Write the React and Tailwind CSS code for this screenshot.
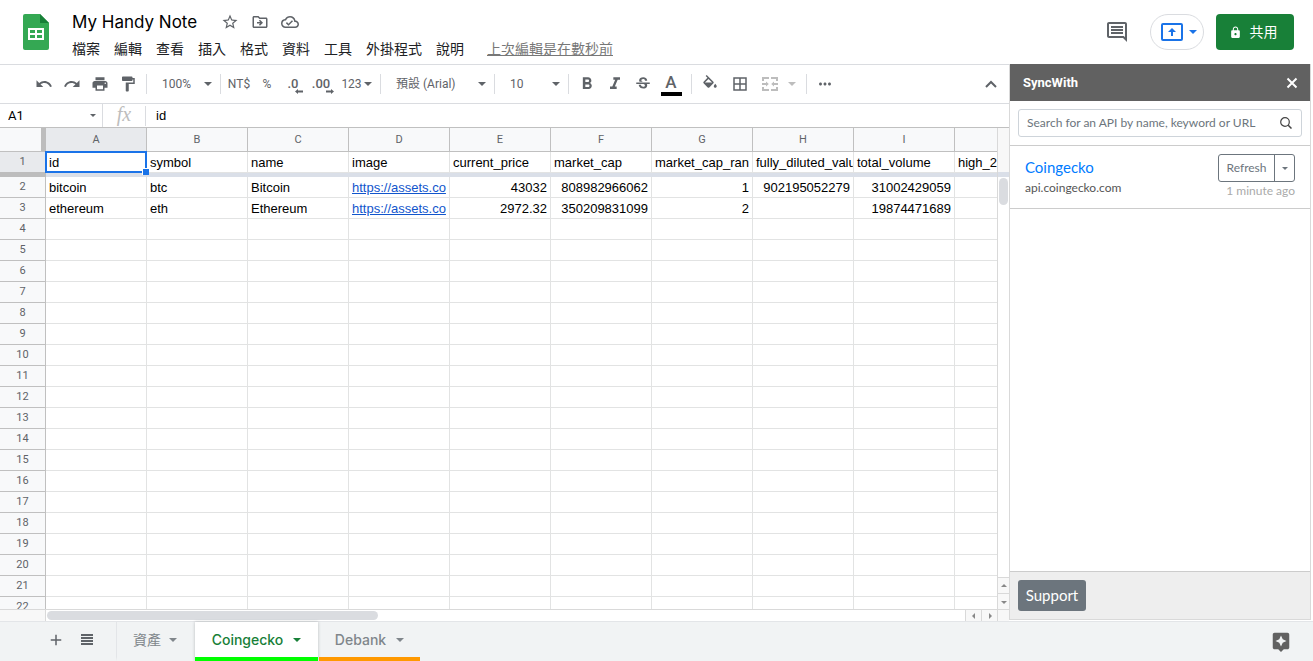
import React, { useState } from "react";
import {
  MdUndo,
  MdRedo,
  MdPrint,
  MdFormatPaint,
  MdFormatBold,
  MdFormatItalic,
  MdStrikethroughS,
  MdBorderAll,
  MdMoreHoriz,
  MdStarBorder,
  MdOutlineDriveFileMove,
  MdOutlineCloudDone,
  MdOutlineComment,
  MdLock,
  MdAdd,
  MdAssistant,
} from "react-icons/md";

const MENUS = ["檔案", "編輯", "查看", "插入", "格式", "資料", "工具", "外掛程式", "說明"];

const COLUMNS = "ABCDEFGHIJKL".split("");

const HEADINGS = [
  "id",
  "symbol",
  "name",
  "image",
  "current_price",
  "market_cap",
  "market_cap_ran",
  "fully_diluted_valu",
  "total_volume",
  "high_2",
];

const COINS = [
  ["bitcoin", "btc", "Bitcoin", "https://assets.co", 43032, 808982966062, 1, 902195052279, 31002429059],
  ["ethereum", "eth", "Ethereum", "https://assets.co", 2972.32, 350209831099, 2, "", 19874471689],
];

const ROW_COUNT = 28;

function Caret({ className = "" }) {
  return (
    <svg viewBox="0 0 8 4" className={`h-1 w-2 shrink-0 fill-current ${className}`} aria-hidden="true">
      <path d="M0 0h8L4 4z" />
    </svg>
  );
}

function Divider({ className = "" }) {
  return <span className={`h-5 w-px shrink-0 bg-[#dadce0] ${className}`} />;
}

function ToolButton({ label, className = "w-7", children }) {
  return (
    <button
      type="button"
      aria-label={label}
      className={`flex h-7 shrink-0 items-center justify-center rounded-sm hover:bg-gray-100 ${className}`}
    >
      {children}
    </button>
  );
}

function ToolSelect({ label, options, className }) {
  return (
    <div className={`relative flex h-7 shrink-0 items-center ${className}`}>
      <select aria-label={label} className="h-full w-full appearance-none bg-transparent pl-[15px] outline-none">
        {options.map((option) => (
          <option key={option}>{option}</option>
        ))}
      </select>
      <Caret className="pointer-events-none absolute right-2" />
    </div>
  );
}

function SheetsLogo() {
  return (
    <svg viewBox="0 0 26 36" className="h-9 w-[26px] shrink-0" aria-label="Sheets">
      <path d="M2 0H17l9 9v25a2 2 0 0 1-2 2H2a2 2 0 0 1-2-2V2a2 2 0 0 1 2-2z" fill="#34a853" />
      <path d="M17 0l9 9h-9z" fill="#188038" />
      <path d="M5 14h16v12H5zM7 16v3h5v-3zM14 16v3h5v-3zM7 21v3h5v-3zM14 21v3h5v-3z" fill="#fff" fillRule="evenodd" />
    </svg>
  );
}

function FillIcon() {
  return (
    <svg viewBox="0 0 24 24" className="size-[18px] fill-current" aria-hidden="true">
      <path d="M16.560 8.940L7.620 0 6.210 1.410l2.380 2.380-5.150 5.150c-.59.59-.59 1.540 0 2.120l5.500 5.500c.29.29.68.44 1.060.44s.77-.15 1.060-.44l5.500-5.500c.59-.58.59-1.530 0-2.120zM5.210 10L10 5.210 14.790 10H5.210zM19 11.500s-2 2.170-2 3.500c0 1.100.9 2 2 2s2-.9 2-2c0-1.330-2-3.500-2-3.500z" />
    </svg>
  );
}

function MergeIcon() {
  return (
    <svg viewBox="0 0 16 14" className="h-[14px] w-4" fill="none" stroke="currentColor" strokeWidth="2" aria-hidden="true">
      <path d="M7 1H1v3M9 1h6v3M7 13H1v-3M9 13h6v-3" />
      <path d="M0 7h5M16 7h-5" />
      <path d="M4 4.500L6.800 7 4 9.500zM12 4.500L9.200 7 12 9.500z" fill="currentColor" stroke="none" />
    </svg>
  );
}

function DecimalIcon({ text, more }) {
  return (
    <span className="flex flex-col items-end pt-[5px] text-[13px] font-medium leading-[10px]">
      {text}
      <svg viewBox="0 0 8 5" className="-mr-1 h-[5px] w-2" fill="currentColor" aria-hidden="true">
        {more ? <path d="M0 1.500h5V0l3 2.500L5 5V3.500H0z" /> : <path d="M8 1.500H3V0L0 2.500 3 5V3.500h5z" />}
      </svg>
    </span>
  );
}

function Header() {
  return (
    <header className="flex h-16 shrink-0 items-start bg-white pl-[23px] pr-[19px] pt-[14px]">
      <SheetsLogo />

      <div className="-mt-1 ml-4 flex-1">
        <div className="flex h-6 items-center text-[#5f6368]">
          <h1 className="pl-[7px] pr-6 font-[Inter,sans-serif] text-[17px] leading-6 text-black">My Handy Note</h1>
          <div className="flex gap-3">
            <button type="button" aria-label="Star"><MdStarBorder size={18} /></button>
            <button type="button" aria-label="Move"><MdOutlineDriveFileMove size={18} /></button>
            <button type="button" aria-label="Saved"><MdOutlineCloudDone size={18} /></button>
          </div>
        </div>

        <nav className="mt-[5px] flex items-center text-[14px] leading-5 text-[#202124]">
          {MENUS.map((menu) => (
            <button key={menu} type="button" className="rounded-sm px-[7px] hover:bg-gray-100">
              {menu}
            </button>
          ))}
          <a href="#history" className="ml-4 text-[#777] underline">上次編輯是在數秒前</a>
        </nav>
      </div>

      <div className="flex items-center">
        <button type="button" aria-label="Comments" className="mr-[21px] text-[#5f6368]">
          <MdOutlineComment size={24} />
        </button>
        <button
          type="button"
          aria-label="Present"
          className="mr-3 flex h-9 w-[54px] items-center justify-center gap-[6px] rounded-full border border-[#dadce0] pl-1 text-[#1a73e8]"
        >
          <svg viewBox="0 0 22 18" className="h-[18px] w-[22px]" aria-hidden="true">
            <rect x="1" y="1" width="20" height="16" rx="1" fill="none" stroke="currentColor" strokeWidth="2" />
            <path d="M11 5l4 4h-3v4h-2V9H7z" fill="currentColor" />
          </svg>
          <Caret />
        </button>
        <button
          type="button"
          className="flex h-9 w-[78px] items-center justify-center gap-2 rounded bg-[#188038] pr-1 text-[14px] text-white"
        >
          <MdLock size={13} />
          共用
        </button>
      </div>
    </header>
  );
}

function Toolbar() {
  return (
    <div className="flex h-10 shrink-0 items-center border-y border-[#dadce0] pl-[30px] pr-1 font-[Roboto,'Noto_Sans_CJK_TC',sans-serif] text-[12px] text-[#5f6368]">
      <ToolButton label="Undo"><MdUndo size={18} /></ToolButton>
      <ToolButton label="Redo"><MdRedo size={18} /></ToolButton>
      <ToolButton label="Print"><MdPrint size={18} /></ToolButton>
      <ToolButton label="Paint format"><MdFormatPaint size={18} /></ToolButton>
      <Divider className="ml-1" />
      <ToolSelect label="Zoom" options={["100%", "50%", "75%", "150%"]} className="w-[73px]" />
      <Divider />
      <ToolButton label="Currency" className="w-9">NT$</ToolButton>
      <ToolButton label="Percent" className="w-5">%</ToolButton>
      <ToolButton label="Fewer decimals" className="w-8"><DecimalIcon text=".0" /></ToolButton>
      <ToolButton label="More decimals" className="w-6"><DecimalIcon text=".00" more /></ToolButton>
      <ToolButton label="Number format" className="w-[47px] gap-[2px]">
        123 <Caret />
      </ToolButton>
      <Divider />
      <ToolSelect label="Font" options={["預設 (Arial)", "Roboto", "Verdana"]} className="w-[113px]" />
      <Divider />
      <ToolSelect label="Font size" options={["10", "11", "12", "14"]} className="w-[73px]" />
      <Divider className="mr-1" />
      <ToolButton label="Bold"><MdFormatBold size={20} /></ToolButton>
      <ToolButton label="Italic"><MdFormatItalic size={20} /></ToolButton>
      <ToolButton label="Strikethrough"><MdStrikethroughS size={18} /></ToolButton>
      <ToolButton label="Text color">
        <span className="w-[21px] border-b-4 border-black text-center text-[17px] font-medium leading-5">A</span>
      </ToolButton>
      <Divider className="ml-[6px] mr-1" />
      <ToolButton label="Fill color"><FillIcon /></ToolButton>
      <ToolButton label="Borders" className="w-8"><MdBorderAll size={18} /></ToolButton>
      <ToolButton label="Merge cells" className="w-[46px] gap-[10px] text-[#bdbdbd]">
        <MergeIcon />
        <Caret />
      </ToolButton>
      <Divider className="mx-1" />
      <ToolButton label="More"><MdMoreHoriz size={18} /></ToolButton>
      <ToolButton label="Hide menus" className="ml-auto w-7">
        <svg viewBox="0 0 12 8" className="h-2 w-3" fill="none" stroke="currentColor" strokeWidth="2" aria-hidden="true">
          <path d="M1 7l5-5 5 5" />
        </svg>
      </ToolButton>
    </div>
  );
}

function FormulaBar() {
  return (
    <div className="flex h-6 shrink-0 items-center border-b border-[#c0c0c0] text-[13px]">
      <input
        aria-label="Name box"
        defaultValue="A1"
        className="w-[88px] pl-2 font-[Roboto,sans-serif] text-black outline-none"
      />
      <button type="button" aria-label="Named ranges" className="flex h-full w-[15px] items-center border-r border-[#dadce0] text-[#5f6368]">
        <svg viewBox="0 0 6 3" className="ml-[2px] h-[3px] w-[6px] fill-current" aria-hidden="true">
          <path d="M0 0h6L3 3z" />
        </svg>
      </button>
      <span className="w-[42px] pb-1 text-center font-['Liberation_Serif',serif] text-[20px] italic leading-5 text-[#bdbdbd]">fx</span>
      <Divider />
      <input
        aria-label="Formula"
        defaultValue="id"
        className="min-w-0 flex-1 pl-[10px] font-['Liberation_Sans',Arial,sans-serif] text-black outline-none"
      />
    </div>
  );
}

function Cell({ value, selected }) {
  const numeric = typeof value === "number";
  const link = typeof value === "string" && value.startsWith("https://");

  return (
    <td className="relative border-b border-r border-[#e2e3e3] p-0">
      <div className={`overflow-hidden whitespace-nowrap pb-px pt-[3px] leading-4 ${numeric ? "pr-[3px] text-right" : "pl-[3px]"}`}>
        {link ? <a href={value} className="text-[#1155cc] underline">{value}</a> : value}
      </div>
      {selected && (
        <span className="absolute -inset-px z-10 border-2 border-[#1a73e8]">
          <span className="absolute -bottom-1 -right-1 size-[7px] border-l border-t border-white bg-[#1a73e8]" />
        </span>
      )}
    </td>
  );
}

function Grid() {
  const rows = Array.from({ length: ROW_COUNT }, (_, i) => i + 2);

  return (
    <div className="min-w-0 flex-1 overflow-hidden">
      <table className="w-0 table-fixed border-separate border-spacing-0 font-['Liberation_Sans',Arial,sans-serif] text-[13px] text-black">
        <colgroup>
          <col className="w-[46px]" />
          {COLUMNS.map((c) => (
            <col key={c} className="w-[101px]" />
          ))}
        </colgroup>
        <thead className="font-[Roboto,sans-serif] text-[11px] text-[#5f6368]">
          <tr className="h-6">
            <td className="border-b border-r-[5px] border-b-[#c0c0c0] border-r-[#bdbdbd] bg-[#f8f9fa] p-0" />
            {COLUMNS.map((c) => (
              <th
                key={c}
                scope="col"
                className={`border-b border-r border-[#c0c0c0] p-0 font-normal leading-4 ${c === "A" ? "bg-[#e8eaed]" : "bg-[#f8f9fa]"}`}
              >
                {c}
              </th>
            ))}
          </tr>
        </thead>
        <tbody>
          <tr className="h-[21px]">
            <th scope="row" className="border-b border-r border-b-[#bdbdbd] border-r-[#c0c0c0] bg-[#e8eaed] p-0 font-[Roboto,sans-serif] text-[11px] font-normal leading-4 text-[#5f6368]">
              1
            </th>
            {COLUMNS.map((c, i) => (
              <Cell key={c} value={HEADINGS[i]} selected={i === 0} />
            ))}
          </tr>
          <tr className="h-1">
            <td className="bg-[#bdbdbd] p-0" />
            <td colSpan={COLUMNS.length} className="bg-[#dadfe8] p-0" />
          </tr>
          {rows.map((n) => (
            <tr key={n} className="h-[21px]">
              <th scope="row" className="border-b border-r border-[#c0c0c0] bg-[#f8f9fa] p-0 font-[Roboto,sans-serif] text-[11px] font-normal leading-4 text-[#5f6368]">
                {n}
              </th>
              {COLUMNS.map((c, i) => (
                <Cell key={c} value={COINS[n - 2]?.[i]} />
              ))}
            </tr>
          ))}
        </tbody>
      </table>
    </div>
  );
}

function ScrollArrow({ d, className }) {
  return (
    <span className={`flex items-center justify-center bg-[#f8f8f8] text-[#888] ${className}`}>
      <svg viewBox="0 0 6 6" className="size-[6px] fill-current" aria-hidden="true">
        <path d={d} />
      </svg>
    </span>
  );
}

function VerticalScrollbar() {
  return (
    <div className="flex w-3 shrink-0 flex-col border-l border-[#d9d9d9]">
      <div className="h-11 shrink-0 bg-[#f8f8f8]" />
      <div className="h-[5px] shrink-0 bg-[#dadfe8]" />
      <div className="flex-1 pl-px pt-px">
        <div className="h-[27px] w-[9px] rounded-full bg-[#dadce0]" />
      </div>
      <ScrollArrow d="M0 4h6L3 1z" className="h-4 border-t border-[#d9d9d9]" />
      <ScrollArrow d="M0 2h6L3 5z" className="h-4 border-t border-[#d9d9d9]" />
    </div>
  );
}

function HorizontalScrollbar() {
  return (
    <div className="flex h-3 shrink-0 border-t border-[#d9d9d9]">
      <div className="w-[46px] border-r border-[#d9d9d9] bg-[#f8f8f8]" />
      <div className="flex flex-1 items-center pl-px">
        <div className="h-[9px] w-[331px] rounded-full bg-[#dadce0]" />
      </div>
      <ScrollArrow d="M4 0v6L1 3z" className="w-4 border-l border-[#d9d9d9]" />
      <ScrollArrow d="M2 0v6l3-3z" className="w-4 border-l border-[#d9d9d9]" />
      <div className="w-3 border-l border-[#d9d9d9] bg-[#f8f8f8]" />
    </div>
  );
}

function Sidebar() {
  const [query, setQuery] = useState("");

  return (
    <aside className="mb-px mr-[2px] flex w-[302px] shrink-0 flex-col border-x border-b border-[#d9d9d9] font-[Lato,'Open_Sans',sans-serif]">
      <div className="flex h-[37px] shrink-0 items-center justify-between bg-[#616161] pl-[13px] pr-3 text-white">
        <h2 className="font-[Roboto,sans-serif] text-[13px] font-bold">SyncWith</h2>
        <button type="button" aria-label="Close">
          <svg viewBox="0 0 12 12" className="size-3" fill="none" stroke="currentColor" strokeWidth="2" aria-hidden="true">
            <path d="M1.500 1.500l9 9M10.500 1.500l-9 9" />
          </svg>
        </button>
      </div>

      <div className="border-b border-[#ccc] p-2">
        <label className="flex h-7 items-center rounded-[3px] border border-[#ced4da] pl-2 pr-[9px]">
          <input
            type="text"
            aria-label="Search for an API"
            value={query}
            onChange={(e) => setQuery(e.target.value)}
            placeholder="Search for an API by name, keyword or URL"
            className="min-w-0 flex-1 text-[12px] outline-none placeholder:text-[#6c757d]"
          />
          <svg viewBox="0 0 12 12" className="size-3 text-[#444]" fill="none" stroke="currentColor" aria-hidden="true">
            <circle cx="5" cy="5" r="4.300" strokeWidth="1.200" />
            <path d="M8.200 8.200l3.300 3.300" strokeWidth="1.500" />
          </svg>
        </label>
      </div>

      <div className="flex justify-between border-b border-[#ccc] px-[15px] py-2">
        <div>
          <a href="#coingecko" className="block pt-px text-[15px] leading-6 text-[#007bff]">Coingecko</a>
          <p className="text-[12px] leading-[18px] text-[#555]">api.coingecko.com</p>
        </div>
        <div className="flex flex-col items-end">
          <div className="flex h-7 rounded-[3px] border border-[#6c757d] text-[12px] text-[#6c757d]">
            <button type="button" className="w-[56px] border-r border-[#6c757d]">Refresh</button>
            <button type="button" aria-label="Refresh options" className="flex w-[19px] items-center justify-center">
              <svg viewBox="0 0 6 3" className="h-[3px] w-[6px] fill-current" aria-hidden="true">
                <path d="M0 0h6L3 3z" />
              </svg>
            </button>
          </div>
          <span className="text-[12px] leading-[18px] text-[#aaa]">1 minute ago</span>
        </div>
      </div>

      <div className="flex-1" />

      <div className="border-t border-[#ccc] bg-[#eee] p-2">
        <button type="button" className="h-[31px] w-[68px] rounded-[3px] bg-[#6c757d] text-[15px] text-white">Support</button>
      </div>
    </aside>
  );
}

function SheetTabs() {
  return (
    <footer className="flex h-10 shrink-0 border-t border-[#e3e5e8] bg-[#f1f3f4] pl-[42px] pr-[21px] text-[#5f6368]">
      <button type="button" aria-label="Add sheet" className="flex w-7 items-center justify-center pb-1">
        <MdAdd size={18} />
      </button>
      <button type="button" aria-label="All sheets" className="ml-[3px] flex w-7 items-center justify-center pb-1">
        <svg viewBox="0 0 12 11" className="h-[11px] w-3 fill-current" aria-hidden="true">
          <path d="M0 0h12v2H0zM0 3h12v2H0zM0 6h12v2H0zM0 9h12v2H0z" />
        </svg>
      </button>
      <nav className="ml-[15px] flex font-[Inter,'Noto_Sans_CJK_TC',sans-serif] text-[14px] text-[#80868b]">
        <button type="button" className="flex w-[79px] items-center gap-2 border-b-4 border-l border-b-transparent border-l-[#e3e5e8] pl-4">
          資產 <Caret />
        </button>
        <button
          type="button"
          className="flex w-[123px] items-center justify-center gap-[10px] border-b-4 border-[#00ff00] bg-white font-medium text-[#188038] shadow-[0_0_3px_rgba(60,64,67,0.3)]"
        >
          Coingecko <Caret />
        </button>
        <button type="button" className="ml-px flex w-[101px] items-center justify-center gap-[10px] border-b-4 border-[#ff9900] font-medium">
          Debank <Caret />
        </button>
      </nav>
      <button type="button" aria-label="Explore" className="ml-auto text-[#616161]"><MdAssistant size={22} /></button>
    </footer>
  );
}

export default function App() {
  return (
    <div className="flex h-screen flex-col overflow-hidden bg-white font-[Roboto,'Noto_Sans_CJK_TC',sans-serif]">
      <Header />
      <main className="flex min-h-0 flex-1">
        <section className="flex min-w-0 flex-1 flex-col">
          <Toolbar />
          <FormulaBar />
          <div className="flex min-h-0 flex-1">
            <Grid />
            <VerticalScrollbar />
          </div>
          <HorizontalScrollbar />
        </section>
        <Sidebar />
      </main>
      <SheetTabs />
    </div>
  );
}
